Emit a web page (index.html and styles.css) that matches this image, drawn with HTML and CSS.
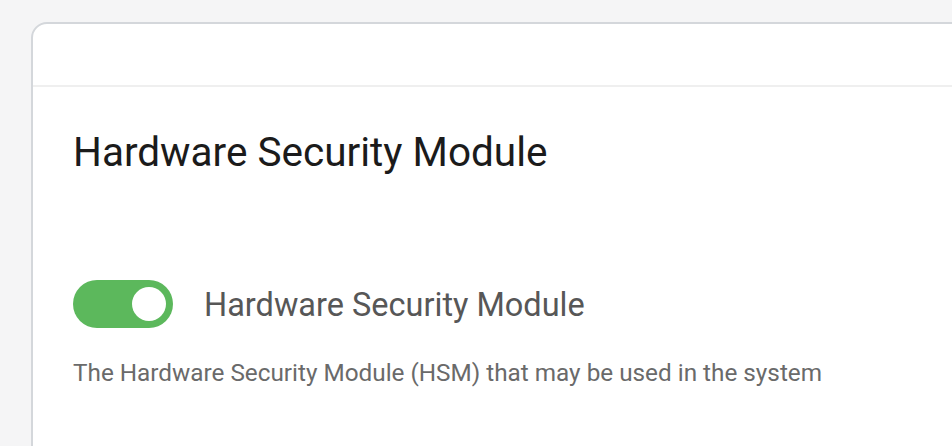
FILE: index.html
```html
<!DOCTYPE html>
<html lang="en">
<head>
    <meta charset="UTF-8">
    <meta name="viewport" content="width=device-width, initial-scale=1.0">
    <title>Hardware Security Module</title>
    <link rel="stylesheet" href="styles.css">
</head>
<body>
    <div class="card">
        <div class="card-header"></div>
        <div class="card-body">
            <h1 class="section-title">Hardware Security Module</h1>

            <div class="setting-row">
                <label class="switch">
                    <input type="checkbox" checked>
                    <span class="slider"></span>
                </label>
                <span class="setting-label">Hardware Security Module</span>
            </div>
            <p class="setting-help">The Hardware Security Module (HSM) that may be used in the system</p>
        </div>
    </div>
</body>
</html>
```

FILE: styles.css
```css
html, body {
    height: 100%;
}

body {
    margin: 0;
    background: #f5f5f6;
    font-family: Roboto, "Liberation Sans", Arial, sans-serif;
    overflow: hidden;
}

.card {
    margin: 22px 0 0 31px;
    width: 1000px;
    height: 600px;
    background: #fff;
    border: 2px solid #d4d7db;
    border-radius: 16px;
    box-sizing: border-box;
}

.card-header {
    height: 61px;
    border-bottom: 2px solid #efefef;
}

.card-body {
    padding: 41px 40px 0 40px;
}

.section-title {
    margin: 0;
    font-size: 40.5px;
    font-weight: 400;
    line-height: 1.2;
    color: #1b1b1b;
}

.setting-row {
    display: flex;
    align-items: center;
    gap: 31px;
    margin-top: 103px;
}

.switch {
    position: relative;
    display: inline-block;
    width: 100px;
    height: 48px;
    flex-shrink: 0;
}

.switch input {
    opacity: 0;
    width: 0;
    height: 0;
}

.slider {
    position: absolute;
    inset: 0;
    background: #5cb85c;
    border-radius: 24px;
    cursor: pointer;
}

.slider::before {
    content: "";
    position: absolute;
    top: 7px;
    right: 7px;
    width: 34px;
    height: 34px;
    border-radius: 50%;
    background: #fff;
}

.setting-label {
    padding-top: 4px;
    font-size: 32.5px;
    line-height: 1.2;
    color: #575757;
}

.setting-help {
    margin: 30px 0 0 0;
    font-size: 24.3px;
    line-height: 1.2;
    color: #6a6a6a;
}
```
